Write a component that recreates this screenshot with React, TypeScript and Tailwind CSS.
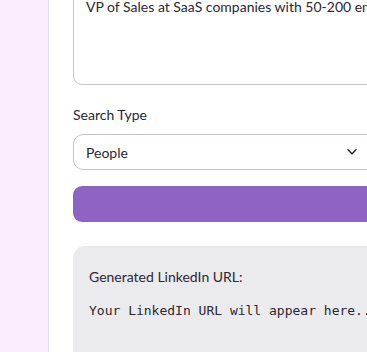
import React from 'react';

export default function App() {
  return (
    <div className="relative flex h-[352px] w-[367px] overflow-hidden bg-white" style={{ fontFamily: 'Lato, "Noto Sans", sans-serif' }}>
      <aside className="w-[49px] shrink-0 border-r border-[#e4e0ea] bg-[#faeefc]" />
      <main className="flex-1 overflow-hidden pl-[24px]">
        <div className="-mt-[14px] flex w-[900px] flex-col">
          <textarea
            readOnly
            wrap="off"
            className="h-[99px] w-full resize-none overflow-hidden rounded-[9px] border border-[#c6c3cc] px-[12px] pt-[10px] text-[14px] leading-5 text-[#2b2734] outline-none"
            defaultValue="VP of Sales at SaaS companies with 50-200 employees in the United States"
          />
          <label className="mt-[20px] text-[14px] leading-5 text-[#2b2734]">Search Type</label>
          <div className="mt-[9px] flex h-[36px] items-center rounded-[10px] border border-[#c6c3cc] pl-[12px] text-[14px] text-[#2b2734]">
            <span>People</span>
          </div>
          <button className="mt-[16px] h-[36px] w-full rounded-[9px] bg-[#8e63c4] text-[14px] font-bold text-white">
            Generate LinkedIn URL
          </button>
          <div className="mt-[24px] h-[140px] rounded-[12px] bg-[#ebebed] px-[16px] pt-[21px]">
            <p className="text-[14px] leading-5 text-[#2b2734]">Generated LinkedIn URL:</p>
            <p className="mt-[14px] whitespace-nowrap text-[13px] leading-5 text-[#2b2734]" style={{ fontFamily: '"DejaVu Sans Mono", monospace' }}>
              Your LinkedIn URL will appear here...
            </p>
          </div>
        </div>
      </main>
      <svg className="pointer-events-none absolute left-[347px] top-[148px]" width="10" height="8" viewBox="0 0 10 8" fill="none">
        <path d="M1 1.8L5 5.8l4-4" stroke="#2b2734" strokeWidth="1.5" strokeLinecap="round" strokeLinejoin="round" />
      </svg>
    </div>
  );
}
